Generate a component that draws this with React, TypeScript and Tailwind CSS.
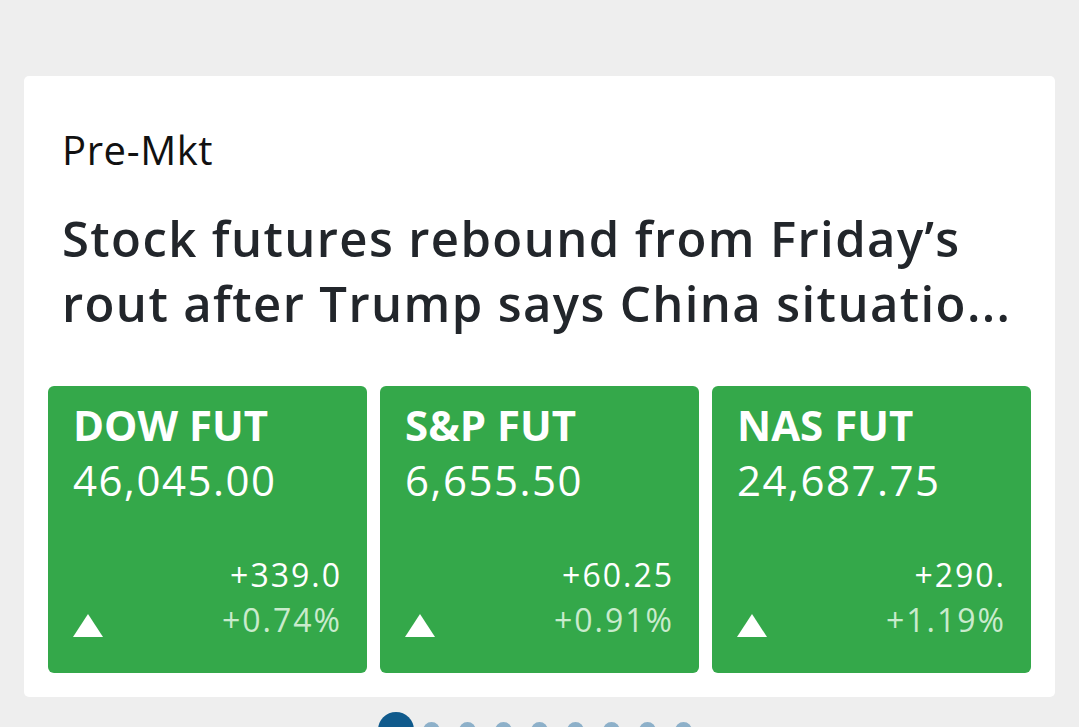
const futures = [
  { name: 'DOW FUT', price: '46,045.00', change: '+339.0', pct: '+0.74%' },
  { name: 'S&P FUT', price: '6,655.50', change: '+60.25', pct: '+0.91%' },
  { name: 'NAS FUT', price: '24,687.75', change: '+290.', pct: '+1.19%' },
];

const UpTriangle = () => (
  <svg width="30" height="23" viewBox="0 0 30 23" className="mb-[5px] shrink-0">
    <polygon points="15,0 30,23 0,23" fill="#ffffff" />
  </svg>
);

export default function App() {
  return (
    <div className="min-h-screen bg-[#eeeeee] pt-[76px] px-[24px] font-['Open_Sans','Lato',sans-serif] overflow-hidden">
      <div className="bg-white rounded-[5px] px-[24px] pt-[50px] pb-[24px]">
        <div className="px-[14px]">
          <div className="text-[40px] leading-[48px] tracking-[0.6px] text-[#111111]">Pre-Mkt</div>
          <h1 className="mt-[32px] text-[49px] leading-[65px] font-semibold tracking-[1.4px] text-[#22262b]">
            <span className="block whitespace-nowrap">Stock futures rebound from Friday’s</span>
            <span className="block whitespace-nowrap">rout after Trump says China situatio...</span>
          </h1>
        </div>

        <div className="mt-[50px] grid grid-cols-3 gap-[13px]">
          {futures.map((f) => (
            <div
              key={f.name}
              className="bg-[#34a84a] rounded-[6px] h-[287px] pl-[25px] pr-[25px] pt-[11px] pb-[31px] flex flex-col text-white"
            >
              <div className="text-[42px] leading-[55px] font-bold">{f.name}</div>
              <div className="text-[42px] leading-[55px] tracking-[1.5px]">{f.price}</div>
              <div className="mt-auto flex items-end justify-between">
                <UpTriangle />
                <div className="text-right text-[32px] leading-[45px] tracking-[2px]">
                  <div>{f.change}</div>
                  <div className="text-[#c9ebcd]">{f.pct}</div>
                </div>
              </div>
            </div>
          ))}
        </div>
      </div>

      <div className="mt-[15px] flex justify-center items-center h-[36px]">
        <div className="w-[36px] h-[36px] flex items-center justify-center">
          <span className="block w-[36px] h-[36px] rounded-full bg-[#105a8c]" />
        </div>
        {[1, 2, 3, 4, 5, 6, 7, 8].map((i) => (
          <div key={i} className="w-[36px] h-[36px] flex items-center justify-center">
            <span className="block w-[17px] h-[17px] rounded-full bg-[#8db0c9]" />
          </div>
        ))}
      </div>
    </div>
  );
}
